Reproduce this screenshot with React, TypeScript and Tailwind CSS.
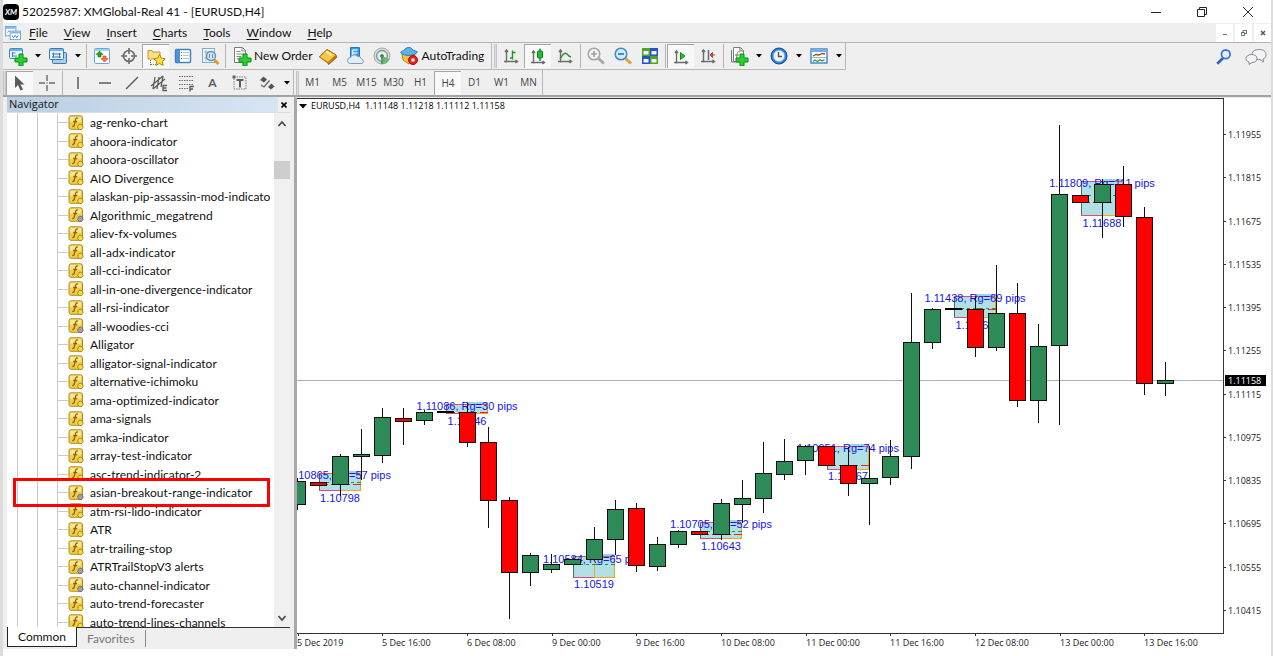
import type { ReactNode } from "react";

const INDICATORS: [string, boolean?][] = [
  ["ag-renko-chart"],
  ["ahoora-indicator"],
  ["ahoora-oscillator"],
  ["AIO Divergence"],
  ["alaskan-pip-assassin-mod-indicato"],
  ["Algorithmic_megatrend", true],
  ["aliev-fx-volumes"],
  ["all-adx-indicator"],
  ["all-cci-indicator"],
  ["all-in-one-divergence-indicator"],
  ["all-rsi-indicator"],
  ["all-woodies-cci", true],
  ["Alligator"],
  ["alligator-signal-indicator"],
  ["alternative-ichimoku"],
  ["ama-optimized-indicator"],
  ["ama-signals"],
  ["amka-indicator"],
  ["array-test-indicator"],
  ["asc-trend-indicator-2"],
  ["asian-breakout-range-indicator", true],
  ["atm-rsi-lido-indicator"],
  ["ATR"],
  ["atr-trailing-stop"],
  ["ATRTrailStopV3 alerts", true],
  ["auto-channel-indicator", true],
  ["auto-trend-forecaster"],
  ["auto-trend-lines-channels"],
];

const HIGHLIGHTED = "asian-breakout-range-indicator";

/* body top, body bottom, high, low, direction */
type Candle = [number, number, number, number, "u" | "d" | "x"];

const CANDLES: Candle[] = [
  [481, 504, 478, 510, "u"],
  [482, 485, 482, 485, "d"],
  [456, 484, 454, 496, "u"],
  [454, 456, 429, 480, "u"],
  [417, 455, 408, 463, "u"],
  [418, 421, 408, 445, "d"],
  [412, 420, 410, 425, "u"],
  [411, 411, 411, 412, "x"],
  [412, 442, 403, 447, "d"],
  [442, 500, 427, 528, "d"],
  [500, 572, 497, 619, "d"],
  [555, 572, 553, 586, "u"],
  [564, 569, 554, 573, "u"],
  [559, 564, 559, 564, "u"],
  [539, 559, 527, 559, "u"],
  [509, 539, 500, 555, "u"],
  [508, 565, 503, 572, "d"],
  [544, 566, 537, 571, "u"],
  [531, 544, 530, 548, "u"],
  [531, 534, 531, 534, "d"],
  [503, 534, 499, 540, "u"],
  [498, 504, 480, 523, "u"],
  [473, 498, 442, 513, "u"],
  [461, 474, 439, 480, "u"],
  [446, 460, 445, 475, "u"],
  [446, 465, 447, 465, "d"],
  [465, 483, 447, 496, "d"],
  [478, 483, 446, 525, "u"],
  [456, 477, 440, 485, "u"],
  [342, 456, 293, 469, "u"],
  [309, 342, 308, 349, "u"],
  [308, 308, 308, 309, "x"],
  [309, 347, 296, 357, "d"],
  [313, 347, 265, 351, "u"],
  [313, 400, 283, 407, "d"],
  [346, 400, 324, 423, "u"],
  [194, 345, 125, 425, "u"],
  [195, 202, 195, 202, "d"],
  [184, 202, 179, 238, "u"],
  [184, 216, 166, 227, "d"],
  [217, 383, 207, 395, "d"],
  [380, 383, 362, 396, "u"],
];

type Range = {
  x: number; top: number; bottom: number; red?: number; green?: number; high: string; low: string; hy: number; ly: number;
};

const RANGES: Range[] = [
  { x: 319, top: 473, bottom: 490, red: 484, green: 482, high: "1.10865, Rg=57 pips", low: "1.10798", hy: 479, ly: 502 },
  { x: 446, top: 404, bottom: 413, red: 412, high: "1.11086, Rg=30 pips", low: "1.11046", hy: 410, ly: 425 },
  { x: 573, top: 556, bottom: 577, green: 564, high: "1.10584, Rg=65 pips", low: "1.10519", hy: 563, ly: 588 },
  { x: 700, top: 522, bottom: 538, red: 534, green: 531, high: "1.10705, Rg=52 pips", low: "1.10643", hy: 528, ly: 550 },
  { x: 827, top: 446, bottom: 469, red: 465, high: "1.10951, Rg=74 pips", low: "1.10867", hy: 452, ly: 480 },
  { x: 954, top: 296, bottom: 317, red: 309, green: 308, high: "1.11438, Rg=69 pips", low: "1.11365", hy: 302, ly: 329 },
  { x: 1081, top: 181, bottom: 215, red: 202, green: 195, high: "1.11809, Rg=111 pips", low: "1.11688", hy: 187, ly: 227 },
];

const PRICES = ["1.11955", "1.11815", "1.11675", "1.11535", "1.11395", "1.11255", "1.11115", "1.10975", "1.10835", "1.10695", "1.10555", "1.10415"];
const TIMES = ["5 Dec 2019", "5 Dec 16:00", "6 Dec 08:00", "9 Dec 00:00", "9 Dec 16:00", "10 Dec 08:00", "11 Dec 00:00", "11 Dec 16:00", "12 Dec 08:00", "13 Dec 00:00", "13 Dec 16:00"];

const FILL = { u: "#2e8b57", d: "#ff0000", x: "#000000" };
const candleX = (i: number) => Math.floor(297.7 + i * 21.17);

/* ---------- icons ---------- */

function Svg({ children, size = 20 }: { children: ReactNode; size?: number }) {
  return (
    <svg width={size} height={size} viewBox="0 0 20 20" fill="none" aria-hidden="true" className="shrink-0">
      {children}
    </svg>
  );
}

const Plus = () => (
  <path d="M11 8h4v4h4v4h-4v4h-4v-4H7v-4h4z" fill="#25d32c" stroke="#0b8a12" strokeWidth="1" />
);
const Axes = () => (
  <path d="M5.500 4v12.500M3 15.500h13.500M4 6l1.500-2L7 6M14.500 14l2 1.500-2 1.500" stroke="#6c6c6c" strokeWidth="1.400" />
);

const NewChartIcon = () => (
  <Svg>
    <rect x="1.500" y="2.500" width="13" height="10" rx="1" fill="#e6f3fd" stroke="#3f86c6" />
    <path d="M2 3h12v2H2z" fill="#6aaee6" />
    <path d="M4.500 6v5M4.500 7h3M4 10h5" stroke="#3f86c6" />
    <Plus />
  </Svg>
);
const ProfilesIcon = () => (
  <Svg>
    <rect x="4.500" y="6.500" width="14" height="11" rx="1" fill="#a9cdec" stroke="#3b78b4" />
    <rect x="1.500" y="2.500" width="14" height="11" rx="1" fill="#e6f2fc" stroke="#3b78b4" />
    <path d="M2 3h13v2H2z" fill="#7db4e4" />
    <path d="M5.500 6.500v5M4 8h9M11.500 7v5M4 11h9" stroke="#3f76ad" />
  </Svg>
);
const MarketWatchIcon = () => (
  <Svg>
    <rect x="2.500" y="2.500" width="15" height="15" rx="1" fill="#fff" stroke="#62a7df" />
    <path d="M3 3h14v2H3z" fill="#a6d1f2" />
    <path d="m7.500 5 3.500 3.500H9V11H6V8.500H4z" fill="#24a329" stroke="#137818" strokeWidth=".6" />
    <path d="m12.500 16 3.500-3.500h-2V10h-3v2.500H9z" fill="#ff7142" stroke="#d23a12" strokeWidth=".6" />
  </Svg>
);
const DataWindowIcon = () => (
  <Svg>
    <circle cx="10" cy="10" r="5.500" stroke="#6b6b6b" strokeWidth="1.600" />
    <path d="M10 2v6M10 12v6M2 10h6M12 10h6" stroke="#6b6b6b" strokeWidth="1.600" />
  </Svg>
);
const NavigatorIcon = () => (
  <Svg>
    <path d="M2 3.500h4l1 1.500h7v7H2z" fill="#fbe08a" stroke="#c8962a" />
    <path d="M4.500 13v5M5 17.500h5" stroke="#777" strokeDasharray="1 1" />
    <path d="m13.500 7.500 1.800 3.700 4 .5-3 2.700.8 4-3.600-2-3.600 2 .8-4-3-2.700 4-.5z" fill="#ffdf3c" stroke="#b98312" />
  </Svg>
);
const TerminalIcon = () => (
  <Svg>
    <rect x="2.500" y="3.500" width="15" height="13" rx="1" fill="#fff" stroke="#3f83c5" strokeWidth="1.500" />
    <path d="M3 4h4v12H3z" fill="#4a93d5" />
    <path d="M8 6.500h1M8 9.500h1M8 12.500h1" stroke="#e24a3a" />
    <path d="M10 6.500h6M10 9.500h6M10 12.500h6" stroke="#b7c3d4" />
  </Svg>
);
const TesterIcon = () => (
  <Svg>
    <rect x="2.500" y="2.500" width="12" height="14" fill="#eef5fb" stroke="#87a9c9" />
    <path d="M4 6h9M6 4v11M4 12h6" stroke="#9ab4cc" />
    <circle cx="11" cy="10" r="4.500" fill="#cfe6f8" stroke="#5f8fbd" strokeWidth="1.400" />
    <path d="M9.500 8v4M12.500 8v4" stroke="#5f8fbd" />
    <path d="m14.500 14 4 4" stroke="#d9a21c" strokeWidth="3" />
  </Svg>
);
const OrderIcon = () => (
  <Svg>
    <path d="M2.500 1.500h8l3 3v12h-11z" fill="#fff" stroke="#7a7a7a" />
    <path d="M10 2v3h3M4.500 5.500h4M4.500 8h7M4.500 10.500h5M4.500 13h3" stroke="#888" />
    <Plus />
  </Svg>
);
const BookIcon = () => (
  <Svg>
    <path d="m1.500 11 8.500 6 .5 1.500 8-7-.5-2.500L9 3.500z" fill="#c07d16" stroke="#8f5a0b" />
    <path d="M9 3.500 18 9l-8 7.500L1.500 11z" fill="#f5c74a" stroke="#b9790f" />
    <path d="m8 5.500 6 4" stroke="#fff0b0" strokeWidth="2" />
  </Svg>
);
const CloudIcon = () => (
  <Svg>
    <path d="M5.500 1.500h9v11h-9z" fill="#2e9df0" stroke="#2473bb" />
    <path d="M7.500 4h5M7.500 7h5M7.500 4v6" stroke="#d8efff" strokeWidth="1.500" />
    <path d="M5.500 17.500a3 3 0 0 1 0-6 4 4 0 0 1 7-1 3.500 3.500 0 0 1 4 2.500 2.300 2.300 0 0 1 0 4.500z" fill="#e6eef8" stroke="#7e99bd" />
  </Svg>
);
const SignalIcon = () => (
  <Svg>
    <circle cx="10" cy="10" r="8" fill="#d3dcdf" stroke="#a3aeb3" />
    <circle cx="10" cy="10" r="5.500" stroke="#8b999f" strokeWidth="1.300" />
    <circle cx="10" cy="10" r="3" stroke="#f1f5f6" strokeWidth="1.300" />
    <path d="m10 10 7.500 3A8 8 0 0 1 9 18z" fill="#6dbb72" />
    <circle cx="10" cy="10" r="1.800" fill="#35793b" />
    <path d="M10 10v8" stroke="#4b8f50" strokeWidth="1.500" />
  </Svg>
);
const AutoIcon = () => (
  <Svg>
    <path d="M3 8h13l-1 6-5 4-6-4z" fill="#f7c53a" stroke="#b98a19" />
    <path d="M1.500 6.500C4 4 5.500 5 6 3c2-2 6-2 7 0 .5 2 3 1 5.500 3-3 4-13 5-17 .5z" fill="#5cb4e6" stroke="#2b7db1" />
    <circle cx="14" cy="14" r="4.500" fill="#e32119" stroke="#a8110b" />
    <path d="M12.500 12.500h3v3h-3z" fill="#fff" />
  </Svg>
);
const BarsIcon = () => (
  <Svg>
    <Axes />
    <path d="M9 12h2.500V5M11.500 6.500h3M11.500 4.500v9" stroke="#1a9622" strokeWidth="1.400" />
  </Svg>
);
const CandlesIcon = () => (
  <Svg>
    <Axes />
    <path d="M12 1.500v12.500" stroke="#137c1a" strokeWidth="1.300" />
    <rect x="9.500" y="4" width="5" height="7" rx="1" fill="#22c22c" stroke="#0f7d17" />
  </Svg>
);
const LineIcon = () => (
  <Svg>
    <Axes />
    <path d="M5.500 12.500c2-4.500 4.500-6.500 6.500-4.500 1.500 2 2.500 2.500 4 3" stroke="#3a8c3f" strokeWidth="1.400" />
  </Svg>
);
const ZoomIcon = ({ out }: { out?: boolean }) => (
  <Svg>
    <path d="m12.500 12.500 5.500 5" stroke={out ? "#dca526" : "#a9a9a9"} strokeWidth="3" />
    <circle cx="8" cy="8" r="5.800" fill={out ? "#d5ebfb" : "#f4f4f4"} stroke={out ? "#3d8ad0" : "#a4a4a4"} strokeWidth="1.500" />
    <path d={out ? "M5 8h6" : "M5 8h6M8 5v6"} stroke={out ? "#2a78c1" : "#a0a0a0"} strokeWidth="1.700" />
  </Svg>
);
const TileIcon = () => (
  <Svg>
    <path d="M2 2h8v8H2zM10 10h8v8h-8z" fill="#52a31f" />
    <path d="M10 2h8v8h-8zM2 10h8v8H2z" fill="#2752c8" />
    <path d="M3.500 5h5v3.500h-5zM11.500 5h5v3.500h-5zM3.500 13h5v3.500h-5zM11.500 13h5v3.500h-5z" fill="#eaf4ff" />
  </Svg>
);
const ScrollIcon = () => (
  <Svg>
    <Axes />
    <path d="m9.500 5.500 4.500 3.500-4.500 3.500z" fill="#2cbd3a" stroke="#138a1e" />
  </Svg>
);
const ShiftIcon = () => (
  <Svg>
    <Axes />
    <path d="M10.500 4v10" stroke="#3d6fa8" strokeWidth="1.500" />
    <path d="M17 9h-4M14.500 6.500 12 9l2.500 2.500z" fill="#d9542b" stroke="#c8401c" />
  </Svg>
);
const IndicatorsIcon = () => (
  <Svg>
    <path d="M4.500 1.500h7l3 3v11h-10z" fill="#fff" stroke="#7a7a7a" />
    <path d="M11 2v3h3M2.500 4v12H10M11 6c-2-1-2.500 0-3 3l-.5 4M6 9h4" stroke="#777" />
    <Plus />
  </Svg>
);
const ClockIcon = () => (
  <Svg>
    <circle cx="10" cy="10" r="8" fill="#2e79cc" stroke="#14549c" />
    <circle cx="10" cy="10" r="5.700" fill="#eef5fc" stroke="#7fb4e8" />
    <path d="M9.500 6v4.500H13" stroke="#555" strokeWidth="1.400" />
  </Svg>
);
const TemplateIcon = () => (
  <Svg>
    <rect x="2" y="3" width="16" height="14" fill="#fff" stroke="#3f83c5" strokeWidth="1.400" />
    <path d="M2 3h16v3H2z" fill="#6db0e8" />
    <path d="m4 10 3-1.500 3 .5 3-1.500 3 .5" stroke="#a8452a" strokeWidth="1.300" />
    <path d="M3 11.500h14" stroke="#8bb5db" />
    <path d="M4 15.500 6 14l2.500 1.500 2.500-2 2 1.500 2.500-1.500" stroke="#349a3a" strokeWidth="1.300" />
  </Svg>
);
const SearchIcon = () => (
  <Svg size={18}>
    <path d="m9.500 10.500-7 7" stroke="#2d62c6" strokeWidth="3" />
    <circle cx="12" cy="7" r="4.800" fill="#e9effa" stroke="#4273d3" strokeWidth="2" />
  </Svg>
);
const ChatIcon = () => (
  <svg width="22" height="18" viewBox="0 0 22 18" fill="none" aria-hidden="true">
    <path d="M14 1.500c4.500 0 7 2 7 5s-1 4-3 4.500l.5 3-3.500-2.500c-5 .5-8-1.500-8-5s3-5 7-5z" fill="#f3f3f7" stroke="#888" />
    <path d="M6.500 6.500c3.500 0 5.500 1.500 5.500 4s-2 4-5 4L4 16.500v-2.500c-2-.5-3-1.500-3-3.500s2-4 5.500-4z" fill="#f3f3f7" stroke="#888" />
  </svg>
);

const CursorIcon = () => (
  <Svg>
    <path d="M5 2.500v12.500l3-3 2.500 5.500 2.500-1-2.500-5h4z" fill="#5b5b5b" />
  </Svg>
);
const CrossIcon = () => (
  <Svg>
    <path d="M10 2v6M10 12v6M2 10h6M12 10h6M9.500 10h1" stroke="#6c6c6c" strokeWidth="1.400" />
  </Svg>
);
const VLineIcon = () => (
  <Svg>
    <path d="M10 4v12" stroke="#5b5b5b" strokeWidth="1.500" />
  </Svg>
);
const HLineIcon = () => (
  <Svg>
    <path d="M4 10h12" stroke="#5b5b5b" strokeWidth="1.500" />
  </Svg>
);
const TrendIcon = () => (
  <Svg>
    <path d="M4 16 16 4" stroke="#5b5b5b" strokeWidth="1.400" />
  </Svg>
);
const ChannelIcon = () => (
  <Svg>
    <path d="M2 13 14 3M4 16 16 6M6 4 4 16M10 4 8 16M14 3l-2 11" stroke="#5b5b5b" strokeWidth="1.300" />
    <path d="M18 12.500h-4v5h4M14 15h3.500" stroke="#5b5b5b" strokeWidth="1.300" />
  </Svg>
);
const FiboIcon = () => (
  <Svg>
    <path d="M3 3.500h14M3 7.500h14M3 11.500h14M3 15.500h9" stroke="#6b6b6b" strokeWidth="1.200" strokeDasharray="1.500 1" />
    <path d="M14 18.500v-5h4M14 16h3" stroke="#5b5b5b" strokeWidth="1.400" />
  </Svg>
);
const LabelIcon = () => (
  <Svg>
    <rect x="4" y="4" width="12" height="12" stroke="#777" strokeDasharray="1.500 1" />
    <path d="M2.500 2.500h3v3h-3z" fill="#666" />
    <path d="M6.500 7h7M10 7v7.500" stroke="#5b5b5b" strokeWidth="2" />
  </Svg>
);
const ArrowsIcon = () => (
  <Svg>
    <path d="m6.500 3.500 3.500 3-3 3-4-2.500z" fill="#555" />
    <path d="m14.500 10.500 3 3-3.500 3-3-2.500z" fill="#555" />
    <path d="m4 12 3 2 5.500-6.500" stroke="#666" strokeWidth="1.300" />
  </Svg>
);

function IndicatorIcon({ gray }: { gray?: boolean }) {
  return (
    <svg width="16" height="16" viewBox="0 0 16 16" fill="none" aria-hidden="true" className="shrink-0">
      <rect x="1" y=".8" width="13.500" height="13.500" rx="2" fill="#f2ce48" stroke="#b38a20" />
      <rect x="2" y="1.800" width="11" height="5" rx="1" fill="#fbe690" />
      <path d="M10 3.200c-1.500-.8-2.300.3-2.600 2L6.300 10c-.3 1.300-.9 1.800-2 1.300M5.200 6.500h4" stroke="#8a6512" strokeWidth="1.300" />
      <path
        d="m12 9 2.500 1.200.6 2.200-1.600 2.200h-2.200l-1.600-2.100.5-2.200z"
        fill={gray ? "#a2a2a2" : "#f8dc3a"}
        stroke={gray ? "#6f6f6f" : "#a7861c"}
      />
    </svg>
  );
}

/* ---------- toolbar parts ---------- */

function Tool({ label, pressed, children }: { label: string; pressed?: boolean; children: ReactNode }) {
  return (
    <button
      type="button"
      aria-label={label}
      aria-pressed={pressed}
      className={
        pressed
          ? "flex h-6 w-[27px] shrink-0 items-center justify-center border-t border-l border-[#a6a6a6] bg-[#f8f8f8]"
          : "flex h-6 w-[27px] shrink-0 items-center justify-center"
      }
    >
      {children}
    </button>
  );
}

function Caret({ label }: { label: string }) {
  return (
    <button type="button" aria-label={label} className="flex h-6 w-[13px] shrink-0 items-center justify-center">
      <svg width="6" height="4" viewBox="0 0 6 4" aria-hidden="true">
        <path d="M0 0h6L3 3.500z" fill="#000" />
      </svg>
    </button>
  );
}

const Sep = () => <span className="mr-px ml-[2px] h-6 w-px shrink-0 bg-[#b4b4b4]" />;
const Grip = () => <span className="h-6 w-[3px] shrink-0 border-x border-[#c4c4c4] bg-[#dcdcdc]" />;

const MENU = ["File", "View", "Insert", "Charts", "Tools", "Window", "Help"];
const FRAMES = ["M1", "M5", "M15", "M30", "H1", "H4", "D1", "W1", "MN"];

function TitleBar() {
  return (
    <header className="flex h-[23px] shrink-0 items-center bg-white">
      <span className="flex h-4 w-4 shrink-0 items-center justify-center rounded-sm bg-black text-[8px] font-bold text-white italic">XM</span>
      <h1 className="ml-[3px] flex-1 text-[12px] whitespace-nowrap text-[#111]">52025987: XMGlobal-Real 41 - [EURUSD,H4]</h1>
      <div className="flex">
        <button type="button" aria-label="Minimize" className="flex w-[46px] justify-center">
          <svg width="10" height="10" viewBox="0 0 10 10" stroke="#222" fill="none"><path d="M0 5.500h10" /></svg>
        </button>
        <button type="button" aria-label="Restore" className="flex w-[46px] justify-center">
          <svg width="10" height="10" viewBox="0 0 10 10" stroke="#222" fill="none"><path d="M.5 2.500h7v7h-7zM2.500 2.500v-2h7v7h-2" /></svg>
        </button>
        <button type="button" aria-label="Close" className="flex w-[46px] justify-center">
          <svg width="10" height="10" viewBox="0 0 10 10" stroke="#222" fill="none"><path d="m0 0 10 10M10 0 0 10" /></svg>
        </button>
      </div>
    </header>
  );
}

function MenuBar() {
  return (
    <nav className="flex h-5 shrink-0 items-center border-b border-[#b4b4b4] text-[12px] text-[#111]">
      <svg width="16" height="16" viewBox="0 0 17 17" fill="none" aria-hidden="true" className="ml-[2px]">
        <rect x=".5" y="1.500" width="11" height="10" fill="#fff" stroke="#6fa5e0" />
        <path d="M1 2h10v2H1z" fill="#7eb3ec" />
        <path d="m2.500 8 2-2 2 2.500L9 6" stroke="#5b8ed0" />
        <rect x="5.500" y="6.500" width="11" height="9" fill="#fff" stroke="#6fa5e0" />
        <path d="M6 7h10v2H6z" fill="#7eb3ec" />
        <path d="m7.500 11 1.500 2.500 2-2.500 1.500 2.500 1.500-2.500" stroke="#3f77c4" />
      </svg>
      <div className="flex flex-1">
        {MENU.map((m) => (
          <button key={m} type="button" className="px-2">
            <span className="underline underline-offset-2">{m[0]}</span>
            {m.slice(1)}
          </button>
        ))}
      </div>
      <div className="flex gap-[2px]">
        <button type="button" aria-label="Minimize chart" className="flex h-[18px] w-[17px] items-center justify-center bg-white">
          <svg width="6" height="6" viewBox="0 0 6 6" stroke="#5c6f86" fill="none"><path d="M1 4.500h4" /></svg>
        </button>
        <button type="button" aria-label="Restore chart" className="flex h-[18px] w-[17px] items-center justify-center bg-white">
          <svg width="6" height="6" viewBox="0 0 6 6" stroke="#5c6f86" fill="none"><path d="M.5 2.500h3v3h-3zM2 2.500v-2h3.500v3h-2" /></svg>
        </button>
        <button type="button" aria-label="Close chart" className="flex h-[18px] w-[17px] items-center justify-center bg-white">
          <svg width="6" height="6" viewBox="0 0 6 6" stroke="#45566c" strokeWidth="1.500" fill="none"><path d="m1 1 4 4M5 1 1 5" /></svg>
        </button>
      </div>
    </nav>
  );
}

function MainToolbar() {
  return (
    <div role="toolbar" aria-label="Standard" className="flex h-[27px] shrink-0 items-center">
      <div className="flex h-full items-center border-r border-b border-[#b8b8b8] pl-px">
        <Tool label="New chart"><NewChartIcon /></Tool>
        <Caret label="New chart options" />
        <Tool label="Profiles"><ProfilesIcon /></Tool>
        <Caret label="Profile options" />
        <Sep />
        <Tool label="Market Watch"><MarketWatchIcon /></Tool>
        <Tool label="Data Window"><DataWindowIcon /></Tool>
        <Tool label="Navigator" pressed><NavigatorIcon /></Tool>
        <Tool label="Terminal"><TerminalIcon /></Tool>
        <Tool label="Strategy Tester"><TesterIcon /></Tool>
        <Sep />
        <button type="button" className="flex items-center gap-[2px] pr-[2px] pl-[5px] text-[12px] whitespace-nowrap text-[#111]">
          <OrderIcon />
          <span>New Order</span>
        </button>
        <Tool label="MetaEditor"><BookIcon /></Tool>
        <Tool label="Cloud"><CloudIcon /></Tool>
        <Tool label="Signals"><SignalIcon /></Tool>
        <button type="button" className="flex items-center gap-[3px] pr-[7px] pl-[3px] text-[12px] whitespace-nowrap text-[#111]">
          <AutoIcon />
          <span>AutoTrading</span>
        </button>
      </div>
      <div className="flex h-full items-center border-r border-b border-[#b8b8b8] pl-[2px]">
        <Grip />
        <Tool label="Bar chart"><BarsIcon /></Tool>
        <Tool label="Candlesticks" pressed><CandlesIcon /></Tool>
        <Tool label="Line chart"><LineIcon /></Tool>
        <Sep />
        <Tool label="Zoom in"><ZoomIcon /></Tool>
        <Tool label="Zoom out"><ZoomIcon out /></Tool>
        <Tool label="Tile windows"><TileIcon /></Tool>
        <Sep />
        <Tool label="Auto scroll" pressed><ScrollIcon /></Tool>
        <Tool label="Chart shift"><ShiftIcon /></Tool>
        <Sep />
        <Tool label="Indicators"><IndicatorsIcon /></Tool>
        <Caret label="Indicator list" />
        <Tool label="Periods"><ClockIcon /></Tool>
        <Caret label="Period list" />
        <Tool label="Templates"><TemplateIcon /></Tool>
        <Caret label="Template list" />
      </div>
      <div className="ml-auto flex items-center gap-3 pr-1">
        <button type="button" aria-label="Search"><SearchIcon /></button>
        <button type="button" aria-label="Chat"><ChatIcon /></button>
      </div>
    </div>
  );
}

function DrawToolbar() {
  return (
    <div role="toolbar" aria-label="Line studies" className="flex h-[25px] shrink-0 items-center">
      <div className="flex h-full items-center border-r border-[#b8b8b8]">
        <Grip />
        <Tool label="Cursor" pressed><CursorIcon /></Tool>
        <Tool label="Crosshair"><CrossIcon /></Tool>
        <Sep />
        <Tool label="Vertical line"><VLineIcon /></Tool>
        <Tool label="Horizontal line"><HLineIcon /></Tool>
        <Tool label="Trendline"><TrendIcon /></Tool>
        <Tool label="Equidistant channel"><ChannelIcon /></Tool>
        <Tool label="Fibonacci retracement"><FiboIcon /></Tool>
        <button type="button" className="h-6 w-[27px] shrink-0 text-[12px] font-bold text-[#5b5b5b]">A</button>
        <Tool label="Text label"><LabelIcon /></Tool>
        <Tool label="Arrows"><ArrowsIcon /></Tool>
        <Caret label="Arrow list" />
      </div>
      <div className="flex h-full items-center border-r border-[#b8b8b8] pl-[2px] font-['Open_Sans','Noto_Sans',sans-serif]">
        <Grip />
        {FRAMES.map((f) => (
          <button
            key={f}
            type="button"
            aria-pressed={f === "H4"}
            className={
              f === "H4"
                ? "h-6 w-[27px] border-t border-l border-[#a6a6a6] bg-[#f8f8f8] text-[10px] text-[#444]"
                : "h-6 w-[27px] text-[10px] text-[#444]"
            }
          >
            {f}
          </button>
        ))}
      </div>
    </div>
  );
}

function Navigator() {
  return (
    <aside className="flex w-[287px] shrink-0 flex-col pl-[4px]">
      <div className="flex h-[15px] shrink-0 items-center">
        <h2 className="h-full flex-1 bg-linear-to-r from-[#b9cee3] to-[#d7e5f3] pl-[2px] font-['Open_Sans','Noto_Sans',sans-serif] text-[11px] leading-[14px] text-[#111]">Navigator</h2>
        <button type="button" aria-label="Close navigator" className="flex w-[12px] justify-center">
          <svg width="6" height="6" viewBox="0 0 6 6" stroke="#000" strokeWidth="1.600"><path d="m.5.5 5 5M5.500.5l-5 5" /></svg>
        </button>
      </div>
      <div className="flex min-h-0 flex-1 border-t border-[#dcdcdc] bg-white">
        <ul className="min-h-0 min-w-0 flex-1 overflow-hidden">
          {INDICATORS.map(([name, gray]) => (
            <li key={name} className="relative flex items-stretch pl-[10px] text-[12px] text-[#111] odd:h-[19px] even:h-[18px]">
              <span className="w-5 shrink-0 border-l border-[#cbcbcb]" />
              <span className="w-5 shrink-0 border-l border-[#cbcbcb]" />
              <span className="flex w-[11px] shrink-0 items-center border-l border-[#cbcbcb]">
                <span className="w-full border-t border-[#cbcbcb]" />
              </span>
              <span className="flex shrink-0 items-center">
                <IndicatorIcon gray={gray} />
              </span>
              <span className="pl-[6px] leading-[20px] whitespace-nowrap">{name}</span>
              {name === HIGHLIGHTED && (
                <span className="absolute -inset-y-[5px] right-[4px] left-[6px] z-10 border-3 border-[#fe0000]" />
              )}
            </li>
          ))}
        </ul>
        <div className="flex w-4 shrink-0 flex-col items-center bg-[#f0f0f0]">
          <svg width="10" height="20" viewBox="0 0 10 20" fill="none" stroke="#444" strokeWidth="1.600"><path d="m1.500 13 3.500-4 3.500 4" /></svg>
          <span className="mt-7 h-[18px] w-full bg-[#cdcdcd]" />
          <svg width="10" height="18" viewBox="0 0 10 18" fill="none" stroke="#444" strokeWidth="1.600" className="mt-auto"><path d="m1.500 7 3.500 4 3.500-4" /></svg>
        </div>
      </div>
      <div role="tablist" className="flex h-[22px] shrink-0 text-[12px]">
        <button type="button" role="tab" aria-selected="true" className="mb-[2px] border-r border-b border-l border-[#222] bg-white px-[10px] leading-[18px] text-[#111]">
          Common
        </button>
        <div className="flex flex-1 border-t border-[#333]">
          <button type="button" role="tab" aria-selected="false" className="my-[2px] border-r border-[#8a8a8a] px-[10px] leading-[16px] text-[#7a7a7a]">
            Favorites
          </button>
        </div>
      </div>
    </aside>
  );
}

function RangeBox({ r }: { r: Range }) {
  const right = r.x + 42;
  const mid = r.x + 21;
  return (
    <g>
      <rect x={r.x} y={r.top} width="42" height={r.bottom - r.top} fill="#b0e0e6" />
      <rect x={mid} y={r.top - 2} width="21" height="2" fill="#9fd3e0" />
      <path d={`M${r.x + 0.5} ${r.top}V${r.bottom}`} stroke="#567" />
      <path d={`M${r.x} ${r.top + 0.5}H${right}M${r.x} ${r.bottom + 0.5}H${mid}`} stroke="#d9506a" />
      <path d={`M${mid + 0.5} ${r.top}V${r.bottom + 0.5}H${right - 0.5}V${r.top}`} stroke="#f0a818" />
      {r.green && <path d={`M${r.x} ${r.green + 0.5}H${right}`} stroke="#1d9a2c" strokeDasharray="10 3 3 3" />}
      {r.red && <path d={`M${r.x} ${r.red + 0.5}H${right}`} stroke="#f02020" strokeDasharray="9 3 2 3" />}
    </g>
  );
}

function Chart() {
  return (
    <main className="ml-[4px] flex min-w-0 flex-1 flex-col border-t border-l-3 border-t-[#e8e8e8] border-l-[#a8a8a8] bg-white font-['Open_Sans','Noto_Sans',sans-serif]">
      <div className="flex min-h-0 flex-1">
        <div className="relative min-w-0 flex-1 border border-l-0 border-[#333]">
          <svg className="absolute inset-0 h-full w-full" fill="none" aria-label="EURUSD H4 candlestick chart" role="img">
            <g transform="translate(-297 -99)">
              <g shapeRendering="crispEdges">
                <path d="M297 380.500H2400" stroke="#a3b1c1" />
                {RANGES.map((r) => (
                  <RangeBox key={r.x} r={r} />
                ))}
              </g>
              <g fill="#1414f0" fontSize="11" fontFamily="'Liberation Sans', Arial, sans-serif" textAnchor="middle">
                {RANGES.map((r) => (
                  <g key={r.x}>
                    <text x={r.x + 21} y={r.hy}>{r.high}</text>
                    <text x={r.x + 21} y={r.ly}>{r.low}</text>
                  </g>
                ))}
              </g>
              <g shapeRendering="crispEdges">
                {CANDLES.map(([t, b, h, l, kind], i) =>
                  kind === "x" ? (
                    <path key={i} d={`M${candleX(i) - 8} ${t + 0.5}h17`} stroke="#000" strokeWidth="2" />
                  ) : (
                    <g key={i} stroke="#111">
                      <path d={`M${candleX(i) + 0.5} ${h}V${l}`} />
                      <rect x={candleX(i) - 7.5} y={t + 0.5} width="16" height={b - t} fill={FILL[kind]} />
                    </g>
                  ),
                )}
              </g>
            </g>
          </svg>
          <p className="relative flex items-center gap-1 pl-[2px] text-[9px] leading-[14px] text-black">
            <svg width="8" height="5" viewBox="0 0 8 5" aria-hidden="true"><path d="M0 0h8L4 4.500z" fill="#000" /></svg>
            <span className="whitespace-pre">EURUSD,H4  1.11148 1.11218 1.11112 1.11158</span>
          </p>
        </div>
        <svg className="h-full w-[47px] shrink-0" fill="none" aria-label="Price scale">
          {PRICES.map((p, i) => {
            const y = Math.round(36 + i * 43.27);
            return (
              <g key={p}>
                <path d={`M0 ${y + 0.5}h2`} stroke="#333" />
                <text x="4" y={y + 4} fontSize="9" fill="#222">{p}</text>
              </g>
            );
          })}
          <rect x="1" y="277" width="41" height="11" fill="#000" />
          <text x="4" y="286" fontSize="9" fill="#fff">1.11158</text>
        </svg>
      </div>
      <svg className="h-[15px] w-full shrink-0" fill="none" aria-label="Time scale">
        {TIMES.map((t, i) => {
          const x = Math.floor(1 + i * 84.68);
          return (
            <g key={t}>
              <path d={`M${x + 0.5} 0v2`} stroke="#333" />
              <text x={i === 0 ? 0 : x} y="12" fontSize="9" fill="#222">{t}</text>
            </g>
          );
        })}
      </svg>
    </main>
  );
}

export default function App() {
  return (
    <div className="flex h-screen flex-col overflow-hidden border-r-2 border-l-3 border-x-[#dcdcdc] bg-[#efefef] font-['Lato','Open_Sans','Noto_Sans',sans-serif]">
      <TitleBar />
      <MenuBar />
      <MainToolbar />
      <DrawToolbar />
      <div className="h-[2px] shrink-0 bg-[#a3a3a3]" />
      <div className="flex min-h-0 flex-1">
        <Navigator />
        <Chart />
      </div>
      <div className="h-[7px] shrink-0 bg-white" />
    </div>
  );
}
